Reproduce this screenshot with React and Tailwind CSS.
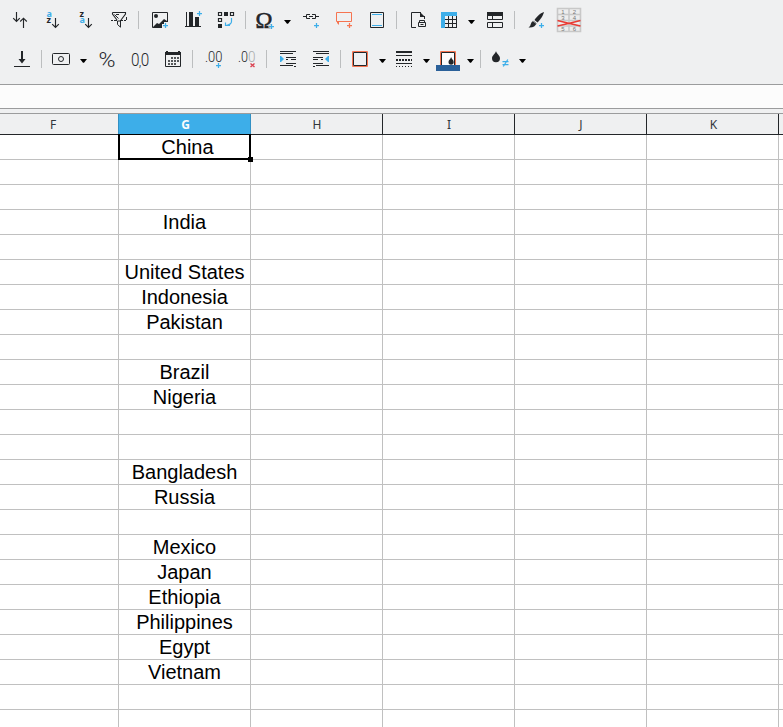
import React from "react";

const INK = "#232629";
const BLUE = "#3daee9";
const ORANGE = "#f67450";

function Icon({ w = 16, h = 16, className = "", children }) {
  return (
    <svg
      width={w}
      height={h}
      viewBox={`0 0 ${w} ${h}`}
      className={`block shrink-0 overflow-visible ${className}`}
      fill="none"
      stroke={INK}
    >
      {children}
    </svg>
  );
}

const Plus = ({ x, y, c = BLUE }) => (
  <path d={`M${x - 2.5} ${y}h5M${x} ${y - 2.5}v5`} stroke={c} strokeWidth="1.25" />
);

const Sep = ({ className }) => <div className={`h-[18px] w-px shrink-0 bg-[#bcbebf] ${className}`} />;

const Caret = ({ className }) => (
  <Icon w={7} h={4} className={`relative top-[2px] ${className}`}>
    <path d="M0 0h7L4 3.700H3z" fill="#000" stroke="none" />
  </Icon>
);

const SortIcon = ({ top, bottom, topColor, bottomColor }) => (
  <Icon className="ml-[17px]">
    <g stroke="none" fontFamily="Noto Sans, sans-serif" fontWeight="700" fontSize="9">
      <text x="1.6" y="5" fill={topColor}>{top}</text>
      <text x="1.6" y="11" fill={bottomColor}>{bottom}</text>
    </g>
    <path d="M10.5 6v9.5M7.2 12.2l3.3 3.3 3.3-3.3" strokeWidth="1.15" />
  </Icon>
);

const Digits = ({ x, y = 11, fill = INK, width, size = 15, children }) => (
  <text
    x={x}
    y={y}
    fill={fill}
    stroke="none"
    fontFamily="Roboto, sans-serif"
    fontWeight="300"
    fontSize={size}
    textLength={width}
    lengthAdjust="spacingAndGlyphs"
  >
    {children}
  </text>
);

function TopRow() {
  return (
    <div className="flex h-10 items-center pl-3">
      <Icon>
        <path d="M4.5 0v9.5M1.2 6.2l3.3 3.3 3.3-3.3M11.5 16V6M8.2 9.5l3.3-3.3 3.3 3.3" strokeWidth="1.15" />
      </Icon>
      <SortIcon top="a" bottom="z" topColor={BLUE} bottomColor={INK} />
      <SortIcon top="z" bottom="a" topColor={INK} bottomColor={BLUE} />
      <Icon className="ml-[17px]">
        <path d="M1.5 .5h13v1.500L10 8M1.500 .5v1.500L6 8" strokeWidth="1.100" />
        <path d="M3.500 2.500L7.500 6.500M5 2.500h3" />
        <path d="M0 8.500h2M3 8.500h3M9 8.500h3M13 8.500h2" />
        <path d="M15.500 5v3M6.500 9v3.500l3 2.700V9M6.500 9h3" />
      </Icon>
      <Sep className="ml-[11px]" />
      <Icon className="ml-[13px]">
        <path d="M10 15.5H.5V.5h15V10" />
        <circle cx="4" cy="4" r="2" fill={INK} stroke="none" />
        <path d="M1 15l4-4 2 1 5-5 3 2v1h-3v2h-2v3z" fill={INK} stroke="none" />
        <Plus x={13.5} y={13.5} />
      </Icon>
      <Icon className="ml-[17px]">
        <path d="M1.5 0v15M0 14.5h16" />
        <path d="M4 0h4v15H4zM10 5h4v10h-4z" fill={INK} stroke="none" />
        <Plus x={14.5} y={1.5} />
      </Icon>
      <Icon className="ml-[17px]">
        <path d="M.5 .5h3v3h-3zM12.5 .5h3v3h-3zM.5 6.5h3v3h-3z" strokeWidth="1.200" />
        <path d="M6 0h4v4H6zM0 12h4v4H0z" fill={INK} stroke="none" />
        <path d="M13.500 6v3.500q0 3-5.500 4M7.500 10.500v3H12" stroke={BLUE} strokeWidth="1.200" />
      </Icon>
      <Sep className="ml-[11px]" />
      <Icon className="ml-[10px]">
        <text x="-.5" y="15.700" fill={INK} stroke={INK} strokeWidth=".6" fontFamily="Liberation Serif, serif" fontSize="23" textLength="17" lengthAdjust="spacingAndGlyphs">Ω</text>
        <path d="M12.500 14.500h6M15.500 11.500v5" stroke="#eff0f1" strokeWidth="2.500" />
        <Plus x={15.5} y={14.5} />
      </Icon>
      <Caret className="ml-3" />
      <Icon className="ml-3">
        <path d="M0 4.5h3M7 2.5H3.5v4H7M9 2.5h3.5v4H9M6 4.5h4M13 4.5h3" />
        <Plus x={13.5} y={13.5} />
      </Icon>
      <Icon className="ml-[17px]">
        <path d="M10 9.5H.5V.5h15v9H10" stroke={ORANGE} />
        <path d="M1 9h2v4L1 11z" fill={ORANGE} stroke="none" />
        <Plus x={13.5} y={13.5} c={ORANGE} />
      </Icon>
      <Icon w={14} className="ml-[18px]">
        <path d="M.5 .5h13v15H.5z" />
        <path d="M2 2.5h10M2 13.5h10" stroke={BLUE} />
      </Icon>
      <Sep className="ml-3" />
      <Icon w={16} className="ml-[14px]">
        <path d="M5 15.5H.5V.5H10" />
        <path d="M9 0l5 5H9z" fill={INK} stroke="none" />
        <path d="M13.5 4v3M8.5 10V8.500h5V10M7.500 10.500h7v4h-7zM9.500 12.500h3" />
      </Icon>
      <Icon className="ml-[14px]">
        <path d="M4 7.5h12M4 11.5h12M4 15.5h12M7.5 4v12M11.5 4v12M15.5 4v12" />
        <path d="M0 0h16v4H4v12H0z" fill={BLUE} stroke="none" />
      </Icon>
      <Caret className="ml-[11px]" />
      <Icon className="ml-3">
        <path d="M0 0h16v4H0z" fill={INK} stroke="none" />
        <path d="M.5 4v3.5h15V4M5.5 4v3.5M.5 10.5h15v5H.5zM5.5 10.5v5" />
      </Icon>
      <Sep className="ml-[11px]" />
      <Icon className="ml-[13px]">
        <path d="M16 0c-3 .8-7 4-9.5 8l3 2.5C12 8 15.3 3.5 16 0z" fill={INK} stroke="none" />
        <path d="M5.5 8.800l3 2.500Q7 16 .5 15.500 2.500 14.500 2.800 12q.5-2.500 2.700-3.200z" fill={INK} stroke="none" />
        <path d="M4.800 9l4 3" stroke="#aaacad" strokeWidth=".8" />
        <Plus x={13.5} y={13.5} />
      </Icon>
      <Icon w={24} h={24} className="ml-[13px]">
        <path d="M.5 .5h23v23H.5zM.5 6.5h23M.5 12.5h23M.5 18h23M12 .5v23" fill="#ededed" stroke="#c8c8c8" strokeWidth="1.6" />
        <g fill="#777" stroke="none" fontFamily="Liberation Sans, sans-serif" fontSize="6" textAnchor="middle">
          <text x="6" y="5.7">1</text>
          <text x="17.5" y="5.7">2</text>
          <text x="6" y="11.7">3</text>
          <text x="17.5" y="11.7">4</text>
          <text x="6" y="22.9">5</text>
          <text x="17.5" y="22.9">6</text>
        </g>
        <path d="M.5 12.5Q12 15.5 23.5 18M23.5 12.5Q12 15.5 .5 18" stroke="#e93a33" strokeWidth="1.3" />
      </Icon>
    </div>
  );
}

const Drop = () => (
  <path d="M4 0c-.4 2.5-4 4.500-4 7.300a4 4 0 0 0 8 0C8 4.500 4.400 2.500 4 0z" fill={INK} stroke="none" />
);

function BottomRow() {
  return (
    <div className="flex h-[38px] items-center pl-[14px]">
      <Icon>
        <path d="M0 15.500h16" />
        <path d="M7 0h2v8h2.500L8 12.500 4.500 8H7z" fill={INK} stroke="none" />
      </Icon>
      <Sep className="ml-[11px]" />
      <Icon w={18} className="ml-[10px]">
        <rect x=".5" y="2.500" width="17" height="11" rx="1" />
        <circle cx="9" cy="8" r="2.500" />
      </Icon>
      <Caret className="ml-[10px]" />
      <Icon className="ml-3">
        <text x="-.5" y="15.500" fill={INK} stroke="none" fontFamily="Roboto, sans-serif" fontWeight="300" fontSize="21" textLength="17" lengthAdjust="spacingAndGlyphs">%</text>
      </Icon>
      <Icon className="ml-[17px]">
        <Digits x={-1} y={15} size={19} width={8.500}>0</Digits>
        <Digits x={6.800} y={15} size={15} width={2.500}>,</Digits>
        <Digits x={8.700} y={15} size={19} width={8.500}>0</Digits>
      </Icon>
      <Icon className="ml-[17px]">
        <path d="M.5 1v14.500h15V1" />
        <path d="M0 1h1V0h2v1h10V0h2v1h1v3H0z" fill={INK} stroke="none" />
        <path d="M6 7h2M9 7h2M12 7h2M3 10h2M6 10h2M9 10h2M12 10h2M3 13h2M6 13h2M9 13h2" strokeWidth="1.500" />
      </Icon>
      <Sep className="ml-[11px]" />
      <Icon className="ml-[13px]">
        <Digits x={-1} width={17.500}>.00</Digits>
        <Plus x={12.500} y={14.500} />
      </Icon>
      <Icon className="ml-[17px]">
        <Digits x={-1} width={10}>.0</Digits>
        <Digits x={9.100} width={7.500} fill="#a8aaab">0</Digits>
        <path d="M11.500 12.500l4 3.500M15.500 12.500l-4 3.500" stroke="#da4453" strokeWidth="1.400" />
      </Icon>
      <Sep className="ml-[11px]" />
      <Icon className="ml-[13px]">
        <path d="M0 .5h16M0 2.500h13M6 6.500h10M6 8.500h2M11 8.500h5M6 12.500h10M0 14.500h13M14 15.500h2" />
        <path d="M0 5h1l3 3-3 3H0z" fill={BLUE} stroke="none" />
      </Icon>
      <Icon className="ml-[17px]">
        <path d="M0 .5h16M3 2.500h13M0 6.500h10M0 8.500h5M8 8.500h2M0 12.500h10M3 14.500h13M0 15.500h2" />
        <path d="M16 5h-1l-3 3 3 3h1z" fill={BLUE} stroke="none" />
      </Icon>
      <Sep className="ml-[11px]" />
      <Icon className="ml-[11px]">
        <path d="M.5 .5h15v15H.5z" stroke={ORANGE} />
        <path d="M1.500 1.500h13v13h-13z" />
      </Icon>
      <Caret className="ml-[11px]" />
      <Icon className="ml-[10px]">
        <path d="M0 1h16" strokeWidth="2" />
        <path d="M0 4.500h16M0 12.500h16" />
        <path d="M0 9h16" strokeWidth="2" strokeDasharray="2 1" />
        <path d="M0 15.500h16" strokeDasharray="1 2" />
      </Icon>
      <Caret className="ml-[11px]" />
      <Icon w={24} className="ml-[6px]">
        <path d="M4.500 15V.5h15V15" stroke={ORANGE} />
        <path d="M5.500 15V1.500h13V15" />
        <path d="M6 2h12v13H6z" fill="#fcfcfc" stroke="none" />
        <g transform="translate(12.500 6) scale(.65 .68)"><Drop /></g>
        <path d="M0 14h24v6H0z" fill="#2a6099" stroke="none" />
      </Icon>
      <Caret className="ml-[7px]" />
      <Sep className="ml-[6px]" />
      <Icon className="ml-[11px]">
        <Drop />
        <path d="M10.500 10.500h6M10.500 13.500h6M15.800 8.500l-4.500 7" stroke={BLUE} strokeWidth="1.250" />
      </Icon>
      <Caret className="ml-[11px]" />
    </div>
  );
}

const COLUMNS = [
  { name: "F", width: "w-[119px]", label: "pr-3" },
  { name: "G", width: "w-[132px]", label: "pl-0.5" },
  { name: "H", width: "w-[132px]", label: "pl-px" },
  { name: "I", width: "w-[132px]", label: "pl-px" },
  { name: "J", width: "w-[132px]", label: "pl-px" },
  { name: "K", width: "w-[132px]", label: "pl-0.5" },
  { name: "", width: "w-1", label: "" },
];

const COUNTRIES = [
  "China", "", "", "India", "", "United States", "Indonesia", "Pakistan",
  "", "Brazil", "Nigeria", "", "", "Bangladesh", "Russia", "", "Mexico",
  "Japan", "Ethiopia", "Philippines", "Egypt", "Vietnam", "", "",
];

export default function App() {
  return (
    <div className="flex h-[727px] w-[783px] flex-col overflow-hidden bg-[#eff0f1] font-['Liberation_Sans',Arial,sans-serif] text-black">
      <div className="h-[84px] shrink-0">
        <TopRow />
        <BottomRow />
      </div>
      <div className="h-[25px] shrink-0 border-y border-[#9b9c9d] bg-[#fcfcfc]" />
      <div className="h-[5px] shrink-0 border-b border-[#9b9c9d]" />
      <div className="flex h-[21px] shrink-0 font-['Noto_Sans',sans-serif] text-[12px] leading-[21px]">
        {COLUMNS.map((c, i) => (
          <div
            key={i}
            className={`${c.width} ${c.label} shrink-0 border-b border-[#232629] text-center ${
              c.name === "G"
                ? "border-r border-r-[#3190c4] border-b-[#232629] bg-[#3daee9] font-bold text-[#fcfcfc]"
                : i === 0
                ? "border-r border-r-[#3190c4] text-[#31363b]"
                : i < 6
                ? "border-r text-[#31363b]"
                : ""
            }`}
          >
            {c.name}
          </div>
        ))}
      </div>
      <div className="shrink-0 bg-white">
        {COUNTRIES.map((name, r) => (
          <div key={r} className="flex h-[25px]">
            {COLUMNS.map((c, i) => (
              <div
                key={i}
                className={`${c.width} relative shrink-0 border-b border-[#c0c0c0] text-center text-[20px] leading-[25px] whitespace-nowrap ${i < 6 ? "border-r" : ""} ${r === 0 && c.name === "G" ? "pl-1.5" : ""}`}
              >
                {c.name === "G" && name}
                {c.name === "G" && r === 0 && (
                  <div className="absolute -top-px -right-px -bottom-px -left-px z-10 border-2 border-t border-black">
                    <span className="absolute -right-1 -bottom-1 h-[5px] w-[5px] bg-black" />
                  </div>
                )}
              </div>
            ))}
          </div>
        ))}
      </div>
    </div>
  );
}
